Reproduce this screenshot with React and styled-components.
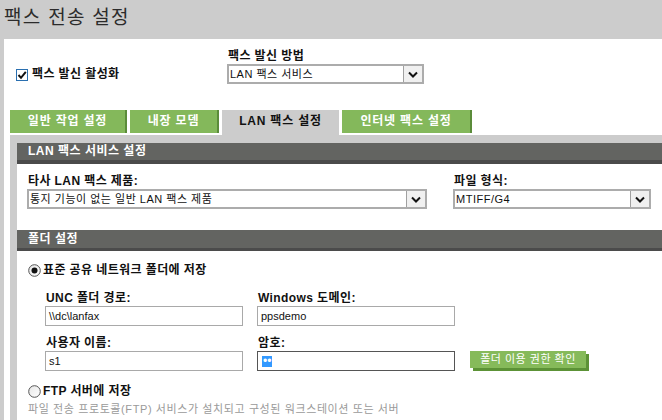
import styled, { createGlobalStyle } from "styled-components";

const GlobalStyle = createGlobalStyle`
  * {
    box-sizing: border-box;
  }

  body {
    margin: 0;
    background: #cccccc;
    font-family: "Liberation Sans", "Noto Sans CJK KR", sans-serif;
    color: #000;
  }
`;

function Chevron() {
  return (
    <svg width="10" height="7" viewBox="0 0 10 7">
      <path d="M1 1.5 L5 5.5 L9 1.5" fill="none" stroke="#111" strokeWidth="2" />
    </svg>
  );
}

function CheckIcon() {
  return (
    <svg width="12" height="12" viewBox="0 0 12 12">
      <rect x="0.5" y="0.5" width="11" height="11" fill="#fff" stroke="#2a6fb0" />
      <path d="M2.5 6 L5 8.8 L9.8 2.8" fill="none" stroke="#111" strokeWidth="2" />
    </svg>
  );
}

function RadioIcon({ checked }) {
  return (
    <svg width="13" height="13" viewBox="0 0 13 13">
      <defs>
        <linearGradient id="rg" x1="0" y1="0" x2="1" y2="1">
          <stop offset="0" stopColor="#e6e6e6" />
          <stop offset="1" stopColor="#ffffff" />
        </linearGradient>
      </defs>
      <circle cx="6.5" cy="6.5" r="5.8" fill="url(#rg)" stroke="#555" strokeWidth="1" />
      {checked && <circle cx="6.5" cy="6.5" r="3" fill="#111" />}
    </svg>
  );
}

function Select({ value, width }) {
  return (
    <SelectBox $width={width}>
      <SelectValue>{value}</SelectValue>
      <SelectArrow>
        <Chevron />
      </SelectArrow>
    </SelectBox>
  );
}

export default function App() {
  return (
    <Page>
      <GlobalStyle />
      <TitleBar>팩스 전송 설정</TitleBar>
      <Main>
        <TopRow>
          <CheckGroup>
            <CheckIcon />
            <BoldText>팩스 발신 활성화</BoldText>
          </CheckGroup>
          <Field>
            <Label>팩스 발신 방법</Label>
            <Select value="LAN 팩스 서비스" width={197} />
          </Field>
        </TopRow>

        <Tabs>
          <Tab $width={117}>일반 작업 설정</Tab>
          <Tab $width={89}>내장 모뎀</Tab>
          <Tab $width={117} $active>LAN 팩스 설정</Tab>
          <Tab $width={130}>인터넷 팩스 설정</Tab>
        </Tabs>

        <Panel>
          <PanelBody>
            <SectionBar $height={17} $border={4}>LAN 팩스 서비스 설정</SectionBar>
            <SectionBody $top={10} $bottom={21}>
              <TwoColumns>
                <Field>
                  <Label>타사 LAN 팩스 제품:</Label>
                  <Select value="통지 기능이 없는 일반 LAN 팩스 제품" width={400} />
                </Field>
                <Field>
                  <Label>파일 형식:</Label>
                  <Select value="MTIFF/G4" width={198} />
                </Field>
              </TwoColumns>
            </SectionBody>

            <SectionBar $height={18} $border={3}>폴더 설정</SectionBar>
            <SectionBody $top={12} $bottom={0}>
              <RadioRow>
                <RadioIcon checked />
                <BoldText>표준 공유 네트워크 폴더에 저장</BoldText>
              </RadioRow>

              <FolderGrid>
                <Field>
                  <Label>UNC 폴더 경로:</Label>
                  <Input>\\dc\lanfax</Input>
                </Field>
                <Field>
                  <Label>Windows 도메인:</Label>
                  <Input>ppsdemo</Input>
                </Field>
                <span />
                <Field>
                  <Label>사용자 이름:</Label>
                  <Input>s1</Input>
                </Field>
                <Field>
                  <Label>암호:</Label>
                  <Input $focused>
                    <Selection>••</Selection>
                  </Input>
                </Field>
                <GreenButton>폴더 이용 권한 확인</GreenButton>
              </FolderGrid>

              <RadioRow $top={13}>
                <RadioIcon />
                <BoldText>FTP 서버에 저장</BoldText>
              </RadioRow>
              <Hint>파일 전송 프로토콜(FTP) 서비스가 설치되고 구성된 워크스테이션 또는 서버</Hint>
            </SectionBody>
          </PanelBody>
        </Panel>
      </Main>
    </Page>
  );
}

const Page = styled.div`
  width: 662px;
  height: 420px;
  overflow: hidden;
  display: flex;
  flex-direction: column;
  background: #cccccc;
`;

const TitleBar = styled.h1`
  margin: 0;
  height: 39px;
  padding-left: 4px;
  font-size: 19px;
  line-height: 35px;
  font-weight: 400;
  letter-spacing: 1.3px;
  color: #2b2b2b;
  flex-shrink: 0;
`;

const Main = styled.div`
  flex: 1;
  margin-left: 4px;
  background: #ffffff;
  padding: 10px 0 0 6px;
  display: flex;
  flex-direction: column;
`;

const TopRow = styled.div`
  display: flex;
  align-items: flex-end;
  padding-left: 6px;
`;

const CheckGroup = styled.div`
  width: 211px;
  height: 20px;
  display: flex;
  align-items: center;
  gap: 4px;

  svg {
    margin-top: 1px;
  }
`;

const BoldText = styled.span`
  font-size: 12px;
  font-weight: 700;
  line-height: 14px;
  letter-spacing: 0.4px;
  color: #111;
`;

const Field = styled.div`
  display: flex;
  flex-direction: column;
`;

const Label = styled.label`
  font-size: 12px;
  font-weight: 700;
  line-height: 14px;
  letter-spacing: 0.4px;
  color: #111;
  padding-left: 1px;
  margin-bottom: 1px;
`;

const SelectBox = styled.div`
  width: ${(p) => p.$width}px;
  height: 20px;
  border: 2px solid #acacac;
  display: flex;
  align-items: stretch;
  background: #fff;
`;

const SelectValue = styled.span`
  flex: 1;
  font-size: 11px;
  line-height: 16px;
  letter-spacing: 0.5px;
  padding-left: 1px;
  color: #111;
  white-space: nowrap;
  overflow: hidden;
`;

const SelectArrow = styled.span`
  width: 19px;
  background: #f0f0f0;
  border-left: 1px solid #a0a0a0;
  display: flex;
  align-items: center;
  justify-content: center;
`;

const Tabs = styled.div`
  display: flex;
  align-items: flex-end;
  gap: 3px;
  margin-top: 26px;
`;

const Tab = styled.div`
  width: ${(p) => p.$width}px;
  height: ${(p) => (p.$active ? 25 : 23)}px;
  margin-bottom: ${(p) => (p.$active ? 0 : 2)}px;
  padding-bottom: ${(p) => (p.$active ? 2 : 0)}px;
  background: ${(p) => (p.$active ? "#cccccc" : "#84b85b")};
  border-right: ${(p) => (p.$active ? "none" : "2px solid #5b8c3a")};
  color: ${(p) => (p.$active ? "#111" : "#fff")};
  font-size: 12px;
  font-weight: 700;
  line-height: 23px;
  letter-spacing: 0.8px;
  text-align: center;
  white-space: nowrap;
`;

const Panel = styled.div`
  flex: 1;
  background: #cccccc;
  padding: 8px 0 0 7px;
  display: flex;
  flex-direction: column;
`;

const PanelBody = styled.div`
  flex: 1;
  background: #ffffff;
`;

const SectionBar = styled.div`
  height: ${(p) => p.$height + p.$border}px;
  background: #636461;
  border-bottom: ${(p) => p.$border}px solid #4b4b4b;
  color: #fff;
  font-size: 12px;
  font-weight: 700;
  line-height: ${(p) => p.$height}px;
  letter-spacing: 0.5px;
  padding-left: 11px;
`;

const SectionBody = styled.div`
  padding: ${(p) => p.$top}px 0 ${(p) => p.$bottom}px 10px;
`;

const TwoColumns = styled.div`
  display: grid;
  grid-template-columns: 400px 198px;
  column-gap: 26px;
`;

const RadioRow = styled.div`
  display: flex;
  align-items: center;
  gap: 2px;
  margin: ${(p) => p.$top || 0}px 0 0 1px;
  height: 14px;
`;

const FolderGrid = styled.div`
  display: grid;
  grid-template-columns: 198px 198px auto;
  column-gap: 14px;
  row-gap: 10px;
  margin: 14px 0 0 18px;
`;

const Input = styled.div`
  height: 20px;
  border: 1px solid ${(p) => (p.$focused ? "#555555" : "#a9a9a9")};
  font-size: 11px;
  line-height: 18px;
  padding-left: 3px;
  color: #111;
  display: flex;
  align-items: center;
`;

const Selection = styled.span`
  background: #3399ff;
  color: #fff;
  font-size: 12px;
  line-height: 11px;
  height: 11px;
  padding: 0 1px;
  margin-left: 1px;
`;

const GreenButton = styled.button`
  align-self: end;
  justify-self: start;
  margin: 0 0 3px 1px;
  width: 116px;
  height: 17px;
  padding: 0;
  border: none;
  background: #86ba5a;
  box-shadow: 3px 3px 0 #5c9236;
  color: #fff;
  font-family: inherit;
  font-size: 11px;
  line-height: 17px;
  letter-spacing: 0.5px;
`;

const Hint = styled.p`
  margin: 4px 0 0 1px;
  font-size: 11px;
  line-height: 14px;
  letter-spacing: 0.6px;
  color: #9a9a9a;
  white-space: nowrap;
`;
